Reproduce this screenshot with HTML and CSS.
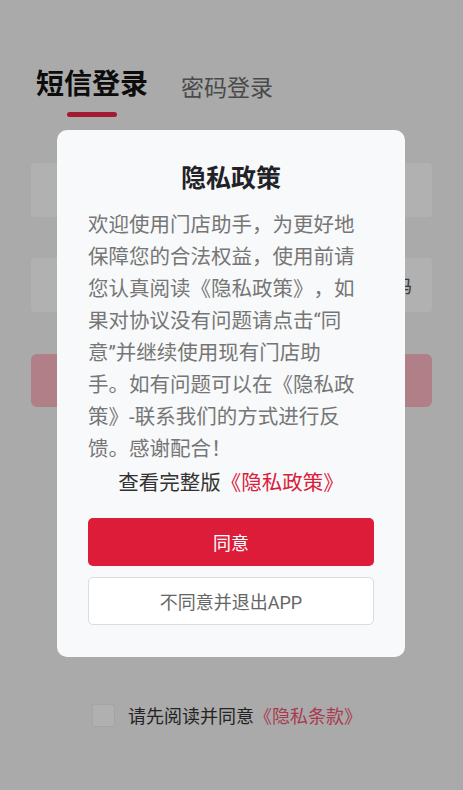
FILE: index.html
```html
<!DOCTYPE html>
<html lang="zh-CN">
<head>
<meta charset="utf-8">
<title>短信登录</title>
<link rel="stylesheet" href="styles.css">
</head>
<body>
<div class="page">
  <div class="tabs">
    <div class="tab tab-active">
      <span class="tab-label">短信登录</span>
      <span class="tab-bar"></span>
    </div>
    <div class="tab">
      <span class="tab-label tab-label-muted">密码登录</span>
    </div>
  </div>
  <div class="form">
    <div class="field"></div>
    <div class="field"><span class="field-action">获取验证码</span></div>
    <div class="login-btn"></div>
  </div>
  <div class="agree-row">
    <span class="checkbox"></span>
    <span class="agree-text">请先阅读并同意<span class="agree-link">《隐私条款》</span></span>
  </div>
</div>

<div class="overlay">
  <div class="modal">
    <div class="modal-title">隐私政策</div>
    <div class="modal-body">欢迎使用门店助手，为更好地保障您的合法权益，使用前请您认真阅读《隐私政策》，如果对协议没有问题请点击“同意”并继续使用现有门店助手。如有问题可以在《隐私政策》-联系我们的方式进行反馈。感谢配合！</div>
    <div class="modal-link">查看完整版<span class="modal-link-red">《隐私政策》</span></div>
    <div class="btn btn-primary">同意</div>
    <div class="btn btn-secondary">不同意并退出APP</div>
  </div>
</div>
</body>
</html>
```

FILE: styles.css
```css
* {
  box-sizing: border-box;
}

html, body {
  margin: 0;
  padding: 0;
}

body {
  width: 463px;
  height: 790px;
  overflow: hidden;
  background: #aaaaaa;
  font-family: "Roboto", "Noto Sans CJK SC", sans-serif;
  text-spacing-trim: space-all;
  position: relative;
}

.page {
  display: flex;
  flex-direction: column;
}

.tabs {
  display: flex;
  align-items: flex-start;
  gap: 33px;
  padding: 65px 0 0 36px;
}

.tab {
  display: flex;
  flex-direction: column;
  align-items: center;
}

.tab-label {
  font-size: 28px;
  line-height: 40px;
  font-weight: 700;
  color: #0c0c0c;
}

.tab-label-muted {
  font-size: 23px;
  line-height: 48px;
  font-weight: 400;
  color: #4a4a4a;
}

.tab-bar {
  width: 50px;
  height: 5px;
  margin-top: 7px;
  border-radius: 3px;
  background: #a31b32;
}

.form {
  display: flex;
  flex-direction: column;
  gap: 41px;
  margin: 46px 31px 0 31px;
}

.field {
  height: 54px;
  border-radius: 4px;
  background: #b1b1b1;
  display: flex;
  align-items: center;
  justify-content: flex-end;
  padding: 0 20px 0 40px;
  font-size: 18px;
}

.field-action {
  color: #3a3a3a;
}

.login-btn {
  height: 53px;
  margin-top: 1px;
  border-radius: 6px;
  background: #b07f88;
}

.agree-row {
  display: flex;
  align-items: center;
  gap: 13px;
  margin-top: 294px;
  padding-left: 92px;
}

.checkbox {
  width: 23px;
  height: 23px;
  border: 1px solid #a4a4a4;
  border-radius: 2px;
  background: #b0b0b0;
}

.agree-text {
  font-size: 18px;
  line-height: 26px;
  color: #232323;
  margin-top: 3px;
}

.agree-link {
  color: #a93a4f;
}

.overlay {
  position: absolute;
  inset: 0;
  display: flex;
  align-items: center;
  justify-content: center;
  padding: 0 1px 3px 0;
}

.modal {
  width: 348px;
  background: #f8f9fa;
  border-radius: 10px;
  padding: 33px 31px 32px 31px;
  display: flex;
  flex-direction: column;
}

.modal-title {
  font-size: 25px;
  line-height: 32px;
  font-weight: 700;
  color: #1f2227;
  text-align: center;
}

.modal-body {
  width: 270px;
  margin-top: 14px;
  font-size: 20.5px;
  line-height: 32px;
  color: #767676;
}

.modal-link {
  margin-top: 2px;
  font-size: 20.5px;
  line-height: 32px;
  color: #333333;
  text-align: center;
}

.modal-link-red {
  color: #d9203a;
}

.btn {
  height: 48px;
  border-radius: 5px;
  display: flex;
  align-items: center;
  justify-content: center;
  font-size: 18px;
}

.btn-primary {
  margin-top: 19px;
  background: #dc1c39;
  color: #ffffff;
}

.btn-secondary {
  margin-top: 11px;
  background: #ffffff;
  border: 1px solid #dcdcdc;
  color: #666666;
}
```
